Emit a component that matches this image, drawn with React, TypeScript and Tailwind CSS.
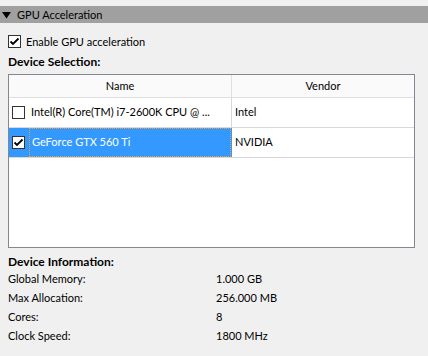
import React from 'react';

interface Device {
  name: string;
  vendor: string;
  enabled: boolean;
  selected: boolean;
}

const devices: Device[] = [
  { name: 'Intel(R) Core(TM) i7-2600K CPU @ ...', vendor: 'Intel', enabled: false, selected: false },
  { name: 'GeForce GTX 560 Ti', vendor: 'NVIDIA', enabled: true, selected: true },
];

const info: [string, string][] = [
  ['Global Memory:', '1.000 GB'],
  ['Max Allocation:', '256.000 MB'],
  ['Cores:', '8'],
  ['Clock Speed:', '1800 MHz'],
];

function CheckBox({ checked }: { checked: boolean }) {
  return (
    <div className="w-[13px] h-[13px] shrink-0 border border-[#333333] bg-white flex items-center justify-center">
      {checked && (
        <svg width="11" height="11" viewBox="0 0 11 11">
          <path d="M1.5 5.5 L4 8 L9.5 2.5" fill="none" stroke="#000" strokeWidth="1.8" />
        </svg>
      )}
    </div>
  );
}

export default function App() {
  return (
    <div
      className="w-[428px] h-[356px] bg-[#f0f0f0] text-[11px] text-black overflow-hidden pt-[6px]"
      style={{ fontFamily: 'Lato, "Noto Sans", sans-serif' }}
    >
      <div className="h-[17px] bg-[#a0a0a0] flex items-center">
        <svg width="17" height="17" viewBox="0 0 17 17" className="shrink-0">
          <polygon points="2,6 11,6 6.5,12.5" fill="#000" />
        </svg>
        <span className="leading-none">GPU Acceleration</span>
      </div>

      <div className="h-[20px] mt-[8px] flex items-center px-[8px] gap-[5px]">
        <CheckBox checked />
        <span className="leading-none">Enable GPU acceleration</span>
      </div>

      <div className="h-[16px] mt-[3px] flex items-center px-[8px] font-bold text-[12px] leading-none">Device Selection:</div>

      <div className="mt-[4px] ml-[8px] w-[407px] h-[174px] border border-[#828790] bg-white flex flex-col">
        <div className="h-[23px] shrink-0 flex bg-[#fafafa] border-b border-[#e0e0e0]">
          <div className="w-[223px] flex items-center justify-center border-r border-[#e0e0e0]">Name</div>
          <div className="flex-1 flex items-center justify-center">Vendor</div>
        </div>
        {devices.map(d => (
          <div key={d.name} className="h-[30px] shrink-0 flex border-b border-[#d8d8d8]">
            <div
              className={`w-[223px] flex items-center pl-[3px] border-r ${
                d.selected ? 'bg-[#3399ff] border-[#3399ff]' : 'border-[#d8d8d8]'
              }`}
            >
              <CheckBox checked={d.enabled} />
              {d.selected ? (
                <span className="ml-[4px] self-stretch flex-1 flex items-center pl-[2px] text-white border border-dotted border-[#f0a030]">
                  {d.name}
                </span>
              ) : (
                <span className="ml-[6px] whitespace-nowrap overflow-hidden">{d.name}</span>
              )}
            </div>
            <div className="flex-1 flex items-center pl-[3px]">{d.vendor}</div>
          </div>
        ))}
        <div className="flex-1" />
      </div>

      <div className="h-[16px] mt-[6px] flex items-center px-[8px] font-bold text-[12px] leading-none">Device Information:</div>
      {info.map(([label, value]) => (
        <div key={label} className="h-[19px] flex items-center px-[8px]">
          <span className="w-[208px]">{label}</span>
          <span>{value}</span>
        </div>
      ))}
    </div>
  );
}
